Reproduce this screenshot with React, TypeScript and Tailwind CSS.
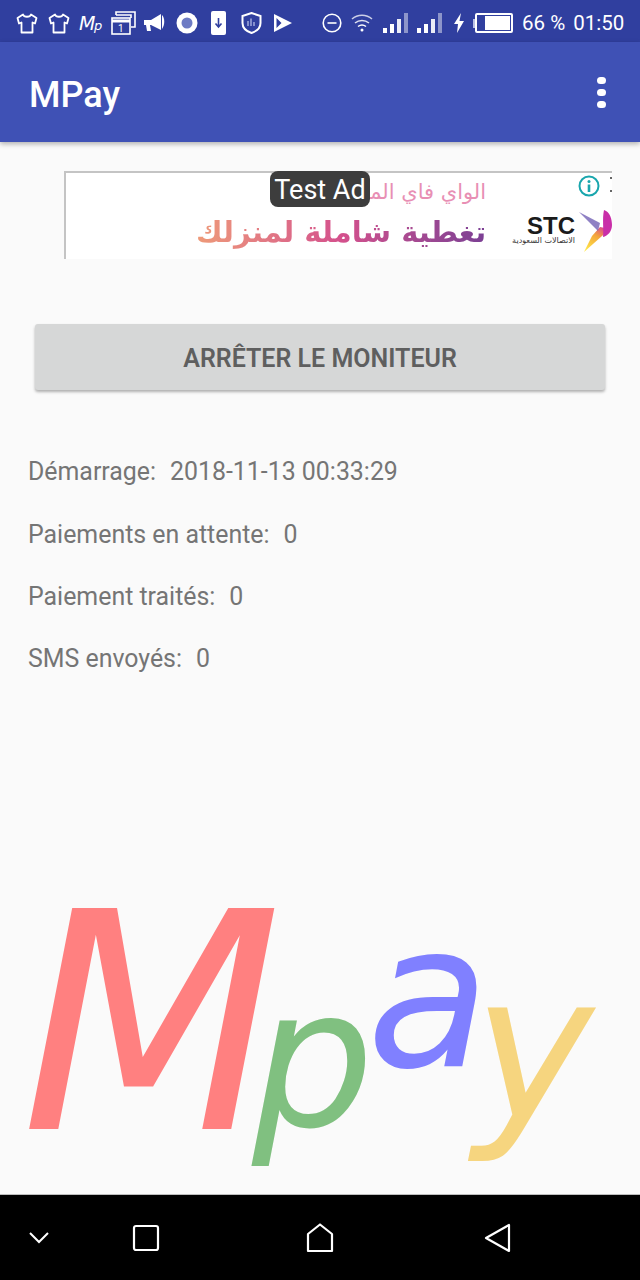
import React from "react";

const Shirt = () => (
  <svg width="22" height="21" viewBox="0 0 22 21" fill="none" stroke="#fff" strokeWidth="1.8" strokeLinejoin="round">
    <path d="M7 1.5 L1.5 5 L3 10.5 L5.5 9.5 V19.5 H16.5 V9.5 L19 10.5 L20.5 5 L15 1.5 C14 4.5 8 4.5 7 1.5 Z" />
  </svg>
);

const Signal = () => (
  <svg width="26" height="22" viewBox="0 0 26 22" fill="#fff">
    <rect x="0" y="16" width="4" height="5" />
    <rect x="7" y="12" width="4" height="9" />
    <rect x="14" y="7" width="4" height="14" opacity="0.9" />
    <rect x="21" y="1" width="4" height="20" opacity="0.45" />
  </svg>
);

const StatusBar = () => (
  <div className="h-[42px] bg-[#303f9f] flex items-center pl-[16px] pt-[4px] text-white shrink-0">
    <div className="flex items-center h-[26px]">
      <Shirt />
      <div className="ml-[10px] flex">
        <Shirt />
      </div>
      <svg width="26" height="22" viewBox="0 0 26 22" className="ml-[9px]">
        <text x="0" y="18" fontFamily="'DejaVu Sans', sans-serif" fontStyle="italic" fontSize="19" fill="#fff">M</text>
        <text x="15" y="18" fontFamily="'DejaVu Sans', sans-serif" fontStyle="italic" fontSize="13" fill="#fff">p</text>
      </svg>
      <svg width="25" height="24" viewBox="0 0 25 24" fill="none" stroke="#fff" strokeWidth="1.6" className="ml-[6px]">
        <path d="M5 4 V1 H24 V16 H20" />
        <path d="M5 4 H20 V7" />
        <rect x="1" y="7" width="18" height="16" />
        <path d="M1 10 H19" strokeWidth="3" />
        <text x="7" y="21" fontFamily="'Roboto', sans-serif" fontSize="10" fill="#fff" stroke="none">1</text>
      </svg>
      <svg width="22" height="20" viewBox="0 0 22 20" fill="#fff" className="ml-[8px]">
        <path d="M0 7 H7 L17 1 V17 L7 12 H6 L7 18 H3 L2 12 H0 Z" />
        <path d="M18 2 C21 5 21 12 18 16 Z" />
      </svg>
      <svg width="22" height="22" viewBox="0 0 22 22" className="ml-[10px]">
        <circle cx="11" cy="11" r="10.5" fill="#fff" />
        <circle cx="11" cy="11" r="5.5" fill="#6d7bc4" />
      </svg>
      <svg width="15" height="24" viewBox="0 0 15 24" className="ml-[13px]">
        <rect width="15" height="24" rx="2" fill="#fff" />
        <path d="M7.5 7 V15 M4.5 12.5 L7.5 16 L10.5 12.5" stroke="#303f9f" strokeWidth="1.6" fill="none" />
      </svg>
      <svg width="21" height="22" viewBox="0 0 21 22" fill="none" className="ml-[15px]">
        <path d="M10.5 1 L19.5 4 V11 C19.5 16 15 19.5 10.5 21 C6 19.5 1.5 16 1.5 11 V4 Z" stroke="#fff" strokeWidth="2" />
        <path d="M7 9 V14 M10 6.5 V14 M13 10 V14" stroke="#a9b2e0" strokeWidth="1.4" />
      </svg>
      <svg width="20" height="20" viewBox="0 0 20 20" fill="#fff" className="ml-[11px]">
        <path d="M1 1 L19 10 L1 19 Z M3.5 5 V15 L8.5 10 Z" fillRule="evenodd" />
      </svg>
    </div>
    <div className="ml-[29px] flex items-center h-[26px]">
      <svg width="20" height="20" viewBox="0 0 20 20" fill="none" stroke="#fff" strokeWidth="1.6">
        <circle cx="10" cy="10" r="8.8" />
        <path d="M5.5 10 H14.5" />
      </svg>
      <svg width="22" height="20" viewBox="0 0 22 20" fill="none" stroke="#fff" strokeWidth="1.5" className="ml-[9px]">
        <path d="M1 6 C6.5 1 15.5 1 21 6" opacity="0.75" />
        <path d="M4 10 C8 6.5 14 6.5 18 10" opacity="0.85" />
        <path d="M7 13.5 C9.5 11.5 12.5 11.5 15 13.5" />
        <circle cx="11" cy="17" r="1.5" fill="#fff" stroke="none" />
      </svg>
      <div className="ml-[10px] flex">
        <Signal />
      </div>
      <div className="ml-[8px] flex">
        <Signal />
      </div>
      <svg width="10" height="20" viewBox="0 0 10 20" fill="#fff" className="ml-[11px]">
        <path d="M7 0 L0 11 H4 L3 20 L10 8 H5.5 Z" />
      </svg>
      <div className="ml-[9px] flex items-center">
        <div className="w-[2px] h-[9px] bg-[#b9c0e4]" />
        <div className="w-[38px] h-[20px] border-2 border-white rounded-[2px] flex justify-end p-[1px]">
          <div className="w-[25px] bg-white" />
        </div>
      </div>
    </div>
    <span className="ml-[9px] text-[20.5px] whitespace-nowrap">66 %</span>
    <span className="ml-[8px] text-[20.5px] whitespace-nowrap">01:50</span>
  </div>
);

const Toolbar = () => (
  <div className="h-[100px] bg-[#3f51b5] flex items-center justify-between pl-[29px] pr-[34px] shadow-[0_2px_5px_rgba(0,0,0,0.3)] shrink-0 relative">
    <h1 className="text-white text-[36px] font-medium mt-[5px]">MPay</h1>
    <div className="flex flex-col gap-[5px]">
      <div className="w-[9px] h-[7px] rounded-full bg-white" />
      <div className="w-[9px] h-[7px] rounded-full bg-white" />
      <div className="w-[9px] h-[7px] rounded-full bg-white" />
    </div>
  </div>
);

const AdBanner = () => (
  <div className="relative ml-[64px] mt-[29px] w-[548px] h-[88px] bg-white border-t-2 border-l-2 border-[#c4c4c4] flex justify-end shrink-0">
    <div dir="rtl" className="flex flex-col items-start mr-[26px] font-['DejaVu_Sans',sans-serif]">
      <div className="text-[21px] leading-[36px] mt-[1px] text-[#e88fb4] whitespace-nowrap">الواي فاي المنزلي</div>
      <div className="text-[29px] leading-[44px] font-bold whitespace-nowrap bg-gradient-to-l from-[#7b3f94] via-[#d4508c] to-[#ee9a78] bg-clip-text text-transparent">
        تغطية شاملة لمنزلك
      </div>
    </div>
    <div className="flex items-center self-end mb-[6px]">
      <div className="flex flex-col items-end">
        <div className="text-[24px] leading-[20px] font-bold text-[#1b1b1b] font-['Liberation_Sans',sans-serif]">STC</div>
        <div dir="rtl" className="text-[8px] leading-[10px] text-[#333] font-['DejaVu_Sans',sans-serif] whitespace-nowrap">الاتصالات السعودية</div>
      </div>
      <svg width="36" height="44" viewBox="0 0 36 44" className="shrink-0 ml-[1px]">
        <defs>
          <linearGradient id="stcTail" x1="0.2" y1="1" x2="0.8" y2="0">
            <stop offset="0" stopColor="#ffe84a" />
            <stop offset="0.6" stopColor="#f4a63a" />
            <stop offset="1" stopColor="#d63a9c" />
          </linearGradient>
          <filter id="stcSoft">
            <feGaussianBlur stdDeviation="0.7" />
          </filter>
        </defs>
        <g filter="url(#stcSoft)">
          <path d="M34 20 L26 27 L8 43 L16 27 L24 18 Z" fill="url(#stcTail)" />
          <path d="M3 3 L24 14 L22 22 Z" fill="#6a57b0" opacity="0.75" />
          <path d="M28 1 C34 3 36 10 36 16 C36 22 32 27 27 28 C28 20 26 10 28 1 Z" fill="#c92fa8" />
        </g>
      </svg>
    </div>
    <div className="absolute top-[-2px] left-[204px] w-[100px] h-[36px] pt-[2px] bg-[#3d3d3d] rounded-[8px] flex items-center justify-center text-white text-[27px] whitespace-nowrap">
      Test Ad
    </div>
    <svg width="22" height="22" viewBox="0 0 22 22" className="absolute top-[2px] right-[12px]">
      <circle cx="11" cy="11" r="9.5" fill="none" stroke="#19a6ad" strokeWidth="2" />
      <circle cx="11" cy="6.5" r="1.5" fill="#19a6ad" />
      <rect x="9.7" y="9.5" width="2.6" height="7.5" fill="#19a6ad" />
    </svg>
    <div className="absolute top-[4px] right-0 flex flex-col gap-[11px]">
      <div className="w-[2px] h-[2px] bg-[#666]" />
      <div className="w-[2px] h-[2px] bg-[#666]" />
    </div>
  </div>
);

const Stat = ({ label, value }: { label: string; value: string }) => (
  <div className="h-[62.3px] flex items-center gap-[14px] whitespace-nowrap">
    <span>{label}</span>
    <span>{value}</span>
  </div>
);

const Logo = () => (
  <svg width="640" height="290" viewBox="0 904 640 290" className="block shrink-0">
    <text x="21" y="1129" fontSize="303" fontStyle="italic" fontFamily="'DejaVu Sans', sans-serif" fill="#ff8080">M</text>
    <text x="252" y="1126" fontSize="192" fontStyle="italic" fontFamily="'DejaVu Sans', sans-serif" fill="#80c080">p</text>
    <text x="367" y="1066" fontSize="200" fontStyle="italic" fontFamily="'DejaVu Sans', sans-serif" fill="#8080ff">a</text>
    <text x="473" y="1119" fontSize="204" fontStyle="italic" fontFamily="'DejaVu Sans', sans-serif" fill="#f6d57f">y</text>
  </svg>
);

const NavBar = () => (
  <div className="h-[86px] bg-black border-t border-[#bdbdbd] shrink-0 flex items-center">
    <svg width="20" height="14" viewBox="0 0 20 14" fill="none" stroke="#fff" strokeWidth="2" className="ml-[29px]">
      <path d="M1 2 L10 11 L19 2" />
    </svg>
    <svg width="28" height="28" viewBox="0 0 28 28" fill="none" stroke="#fff" strokeWidth="2.2" className="ml-[83px]">
      <rect x="2" y="2" width="24" height="24" rx="2" />
    </svg>
    <svg width="28" height="30" viewBox="0 0 28 30" fill="none" stroke="#fff" strokeWidth="2.2" strokeLinejoin="round" className="ml-[146px]">
      <path d="M2 11 L14 1.5 L26 11 V28 H2 Z" />
    </svg>
    <svg width="28" height="30" viewBox="0 0 28 30" fill="none" stroke="#fff" strokeWidth="2.2" strokeLinejoin="round" className="ml-[150px]">
      <path d="M25 2 V28 L2 15 Z" />
    </svg>
  </div>
);

export default function App() {
  return (
    <div className="w-[640px] h-[1280px] bg-[#fafafa] flex flex-col overflow-hidden font-['Roboto',sans-serif]">
      <StatusBar />
      <Toolbar />
      <AdBanner />
      <button className="mx-[35px] mt-[65px] h-[66px] pt-[3px] shrink-0 bg-[#d6d7d7] rounded-[3px] shadow-[0_2px_3px_rgba(0,0,0,0.3)] text-[#5f5f5f] text-[25px] font-semibold uppercase">
        Arrêter le moniteur
      </button>
      <div className="mt-[51px] pl-[28px] pr-[29px] flex flex-col text-[24.9px] text-[#757575] shrink-0">
        <Stat label="Démarrage:" value="2018-11-13 00:33:29" />
        <Stat label="Paiements en attente:" value="0" />
        <Stat label="Paiement traités:" value="0" />
        <Stat label="SMS envoyés:" value="0" />
      </div>
      <div className="flex-1" />
      <Logo />
      <NavBar />
    </div>
  );
}
